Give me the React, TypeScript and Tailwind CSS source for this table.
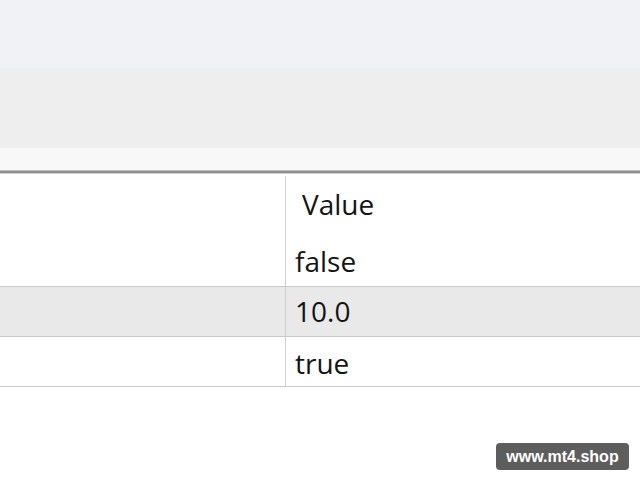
export default function App() {
  const font = { fontFamily: '"Liberation Sans", Arial, sans-serif' };
  const cell = { fontFamily: '"Open Sans", "Liberation Sans", sans-serif' };
  return (
    <div className="relative w-[640px] h-[480px] bg-white flex flex-col overflow-hidden" style={font}>
      <div className="h-[68px] bg-[#f1f2f5]" />
      <div className="h-[80px] bg-[#eeeeee]" />
      <div className="h-[22px] bg-[#f8f8f8]" />
      <div className="h-[1px] bg-[#bdbdbd]" />
      <div className="h-[2px] bg-[#8e8e8e]" />
      <div className="h-[1px] bg-[#cfcfcf]" />
      <div className="grid grid-cols-[286px_1fr] text-[28px] text-[#141414] border-b border-[#c9c9c9]" style={cell}>
        <div className="h-[61px] border-r border-[#cfcfcf] mt-[2px]" />
        <div className="h-[61px] flex items-center pl-[16px] pb-[5px] mt-[2px]">Value</div>
        <div className="h-[49px] border-r border-[#cfcfcf]" />
        <div className="h-[49px] flex items-center pl-[9px] pb-[2px]">false</div>
        <div className="h-[51px] border-r border-[#cfcfcf] border-y border-y-[#c9c9c9] bg-[#e9e9e9]" />
        <div className="h-[51px] flex items-center pl-[9px] pb-[1px] border-y border-[#c9c9c9] bg-[#e9e9e9]">10.0</div>
        <div className="h-[49px] border-r border-[#cfcfcf]" />
        <div className="h-[49px] flex items-center pl-[9px] pt-[2px]">true</div>
      </div>
      <div className="absolute left-[496px] top-[443px] w-[133px] h-[27px] rounded-[4px] bg-[#5d5d5d] flex items-center justify-center text-white font-bold text-[16px]">
        www.mt4.shop
      </div>
    </div>
  );
}
